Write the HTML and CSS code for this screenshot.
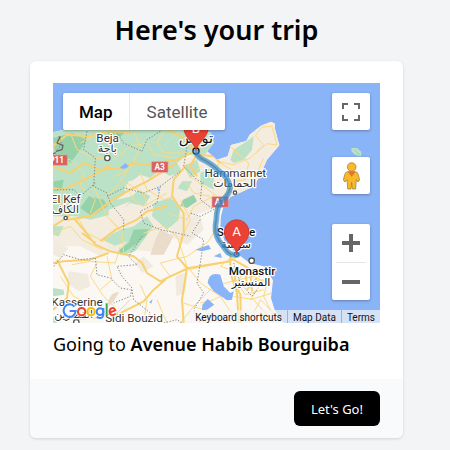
FILE: index.html
```html
<!DOCTYPE html>
<html lang="en">
<head>
<meta charset="utf-8">
<meta name="viewport" content="width=device-width, initial-scale=1">
<title>Here's your trip</title>
<link rel="stylesheet" href="styles.css">
</head>
<body>
<main class="page">
  <h1 class="title">Here's your trip</h1>
  <section class="card">
    <div class="card-body">
      <div class="map">
        <svg class="map-canvas" viewBox="158 250 981 720" preserveAspectRatio="xMidYMid slice" role="img" aria-label="Route from Sousse to Tunis">
          <defs>
            <clipPath id="land">
              <path d="M150 400L200 388L560 380L600 388L632 400L640 430L620 455L650 480L682 470L692 436L738 424L748 405L782 378L812 366L824 372L823 385L837 437L800 480L775 535L760 560L722 578L690 592L669 622L662 650L660 682L672 722L705 758L748 790L790 800L818 842L812 895L822 928L835 950L858 980L150 980Z"/>
            </clipPath>
            <g id="wordmark">
              <path class="blue" d="M222 921A18 19 0 1 0 226 934H208"/>
              <circle class="red" cx="244" cy="936" r="11"/>
              <circle class="yellow" cx="272" cy="936" r="11"/>
              <circle class="blue" cx="299" cy="936" r="10"/>
              <path class="blue" d="M309 925V946Q306 960 289 952"/>
              <path class="green-line" d="M319 911V949"/>
              <path class="red" d="M328 939L345 932Q340 922 333 926Q325 932 329 942Q337 951 346 942"/>
            </g>
          </defs>
          <g clip-path="url(#land)">
            <path fill="#fbf8f3" d="M150 360H860V980H150Z"/>
            <path class="sand" d="M150 640L260 640L330 590L400 530L480 500L600 460L640 350L850 350L850 560L700 590L650 625L600 640L560 650L510 665L500 720L450 755L390 750L360 740L300 770L240 740L150 740Z"/>
            <path class="soft" d="M335 700L385 720L370 765L320 745ZM205 815L262 822L270 860L235 875L200 850ZM525 830L560 818L555 880L528 890ZM160 730L205 745L180 775L158 765ZM510 640L600 650L610 690L560 735L510 710ZM430 770L460 800L425 820L405 790Z"/>
            <path class="dune" d="M480 690L520 710L490 765L450 765L465 720ZM325 900Q335 875 356 878L340 905L320 925Z"/>
            <path class="green" d="M150 380H640L645 425L610 470L560 465L530 490L545 515L510 530L480 512L450 535L420 525L400 540L380 575L350 600L395 590L415 570L450 590L430 620L390 610L350 640L310 650L270 660L230 650L150 650Z"/>
            <path class="green" d="M460 610L510 595L540 620L535 660L500 690L455 650ZM550 500L590 480L600 515L570 535ZM600 520L640 500L640 570L600 550ZM690 480L700 450L740 425L760 410L755 450L730 480L700 490ZM545 545L575 545L560 575L530 565ZM158 865L190 870L192 885L158 890ZM158 950L170 970H158ZM158 680L190 680L175 710L158 705ZM305 720L360 690L400 680L440 650L460 680L405 755L370 765L355 755L380 725L345 738Z"/>
            <path class="forest" d="M158 415L215 400L260 420L240 450L210 490L190 470L165 465ZM265 590L310 600L322 620L275 650L240 625ZM548 600L580 585L590 605L560 625L540 618ZM400 690L445 688L435 710L405 735L360 765L355 752L385 730ZM320 390L370 400L350 425L325 412ZM160 545L190 540L185 570L160 575Z"/>
            <path class="sand" d="M385 545L430 535L425 560L395 580L370 570ZM325 630L390 605L355 642L325 648ZM470 540L520 525L545 545L520 585L480 585Z"/>
            <g class="minor">
              <path d="M158 470L210 480L250 520L240 560L285 600L270 640M210 400L230 450L280 475L340 480L390 440L440 430L460 465L530 475M240 430L300 400L350 430L345 400M400 395L420 440L400 490L370 520L340 530M490 395L470 430L490 460L580 460M490 440L540 390M420 520L440 570L490 600L520 590M395 490L350 560L320 590M370 545L400 600L430 620L500 580M440 620L430 580L380 550M280 560L320 650L360 690M230 650L260 700L310 725L350 690M158 700L210 680L245 720L305 750M370 760L365 700L330 660M430 700L490 680L530 710L560 800M500 640L560 660L580 620L640 590M560 550L580 580L630 590M540 600L570 660L540 720M600 500L570 530L610 560L650 590"/>
              <path d="M290 790L270 830L310 890L350 930L350 970M320 770L335 840L300 870M360 740L345 790L270 785L215 795M180 830L220 890L280 920M420 855L440 900L430 970M510 830L480 790L560 770L620 730L640 700M565 805L600 850L660 890L700 950M600 910L640 900L680 880M550 910L610 930L660 970M540 970L580 920L640 860L695 845L760 830L800 850L790 890L820 950M565 810L690 785L720 765M740 800L710 850L735 885L790 870M720 850L790 840L750 900L815 880M700 890L760 900L820 970M470 900L500 970M690 775L660 800L720 820M760 940L780 900L850 970M230 960L340 950L390 900"/>
              <path d="M650 485L700 495L750 475L800 432L830 436L815 380L785 382L765 408L790 435L770 455M690 440L710 460L745 490L735 540L680 550M620 520L660 490L710 520L690 580M700 520L770 520L790 475"/>
            </g>
            <g class="major">
              <path d="M158 440L200 405L270 410L320 395L395 398M158 500L210 520L250 490L300 510L370 505L400 490L440 495L530 480L585 455M158 565L190 570L240 545L300 515L330 495M200 660L270 650L330 605L390 570L440 545L530 490M158 595L190 620L205 650L158 680M220 655L250 690L285 735L330 755L400 770L425 790L440 820L480 845L510 830L565 805L690 785M325 760L270 780L190 785L158 790M170 780L205 850L200 895L158 930M300 725L345 690L410 660L440 635L500 620M285 730L245 700M340 950L430 905L460 870L495 840M560 495L520 540L515 590L550 640L550 700L530 770L560 805L545 900L550 970"/>
              <path d="M587 462L640 500L675 535L688 570L650 620L642 700L690 765L690 820L710 880L715 970M702 800L705 855L720 885L722 970M590 462L570 500L590 530M590 465L640 470L660 490M690 775L735 800L780 830M587 460L560 420L500 390M588 460L600 425M735 810L740 860M750 820L755 875M770 835L740 870M745 850L790 860"/>
            </g>
            <g class="border">
              <path d="M260 395L250 450L285 475L280 560L320 580L330 610L370 660L370 690M600 395L560 440L550 500L590 540L610 550M480 395L440 420L425 455L370 430L350 400M285 550L240 590L220 570L170 570M540 515L480 560L430 580L370 565L320 590M480 560L470 610L420 635L430 670L480 690L530 700L570 710M605 550L600 600L640 630L600 650L570 640M600 660L575 700L610 720L600 790L590 850L610 880L580 930L600 970"/>
              <path d="M425 710L385 770L410 795L350 800L365 830L395 865L390 890L340 910M395 870L400 900L450 940L440 970M160 800L190 765L240 780L285 775L290 825L330 835L360 865L390 870M490 970L530 960L545 970M700 790L720 850L755 890L770 870M175 410L185 435L170 450"/>
            </g>
            <path class="country" d="M180 410L170 430L188 437L185 450L167 455M158 463L166 459"/>
            <path class="water" d="M358 505L375 490L386 500L372 508ZM470 567L477 565L475 576ZM447 908L457 898L453 912ZM585 750L625 736L632 748L605 755ZM622 850Q625 815 660 825L670 860L690 880L700 875L695 900L680 902L640 875ZM606 915L622 898L642 915L620 930L605 932ZM640 770L660 760L665 775Z"/>
          </g>
          <path class="green" d="M1053 445L1070 445L1083 456L1082 470L1066 466L1054 456Z"/>
          <path fill="none" stroke="#8fcda4" stroke-width="3" d="M1062 450L1078 466"/>
          <g class="shield">
            <rect x="130" y="466" width="71" height="31" rx="2"/>
            <rect x="454" y="486" width="49" height="32" rx="2"/>
            <rect x="635" y="591" width="49" height="32" rx="2"/>
          </g>
          <g class="shield-text">
            <text x="169" y="491">P11</text><text x="478" y="511">A3</text><text x="659" y="616">A1</text>
          </g>
          <g class="town">
            <circle cx="321" cy="475" r="8"/><circle cx="196" cy="655" r="5"/><circle cx="704" cy="579" r="5"/><circle cx="754" cy="783" r="8"/><circle cx="228" cy="968" r="8"/>
          </g>
          <g class="label">
            <text class="arabic" x="321" y="457">باجة</text><text x="322" y="426">Beja</text>
            <text class="arabic" x="703" y="563">الحمامات</text><text x="705" y="532">Hammamet</text>
            <text class="arabic" x="195" y="639">الكاف</text><text x="196" y="609">El Kef</text>
            <text class="arabic" x="220" y="954">القصرين</text><text x="230" y="919">Kasserine</text>
            <text x="401" y="966">Sidi Bouzid</text>
          </g>
          <g class="label city">
            <text class="arabic large" x="587" y="430">تونس</text>
            <text class="arabic" x="707" y="745">سوسة</text><text x="707" y="710">Sousse</text>
            <text class="arabic" x="752" y="859">المنستير</text><text x="755" y="825">Monastir</text>
          </g>
          <circle cx="587" cy="454" r="9" fill="#fff" stroke="#111" stroke-width="4"/>
          <path class="route" d="M587 457Q592 474 612 482Q640 497 656 515Q684 530 689 565Q687 585 664 604Q649 620 648 660Q640 695 655 722L682 758Q695 768 711 765"/>
          <path class="route-line" d="M587 457Q592 474 612 482Q640 497 656 515Q684 530 689 565Q687 585 664 604Q649 620 648 660Q640 695 655 722L682 758Q695 768 711 765"/>
          <circle cx="708" cy="764" r="7" fill="none" stroke="#2d72ad" stroke-width="3"/>
          <g class="pin">
            <path d="M587 453C584 429 550 416 550 382A37 37 0 0 1 624 382C624 416 590 429 587 453Z"/>
            <path d="M709 764C706 736 672 730 672 697A37 37 0 0 1 746 697C746 730 712 736 709 764Z"/>
            <text x="587" y="401">B</text><text x="709" y="710">A</text>
          </g>
          <use class="wordmark-halo" href="#wordmark"/>
          <use class="wordmark" href="#wordmark"/>
        </svg>

        <div class="map-types">
          <button class="type active" type="button">Map</button>
          <button class="type" type="button">Satellite</button>
        </div>
        <div class="map-tools">
          <button class="tool" type="button" aria-label="Toggle fullscreen view">
            <svg width="18" height="18" viewBox="0 0 18 18"><path fill="none" stroke="#666" stroke-width="2" d="M1 6V1H6M12 1H17V6M17 12V17H12M6 17H1V12"/></svg>
          </button>
          <button class="tool pegman" type="button" aria-label="Street View">
            <svg width="17" height="28" viewBox="0 0 51 84"><g fill="#fbb829" stroke="#8d7440" stroke-width="2"><path d="M13 29Q7 30 5 38L1 54L6 60L12 53L14 81H24L26 61L28 81H38L40 53L45 60L50 54L46 38Q44 30 38 29Z"/><circle cx="26" cy="15" r="13"/></g><path fill="#e2762b" d="M14 29H38L26 44Z"/></svg>
          </button>
          <div class="zoom">
            <button type="button" aria-label="Zoom in"><svg width="18" height="18" viewBox="0 0 18 18"><path stroke="#666" stroke-width="4" d="M0 9H18M9 0V18"/></svg></button>
            <button type="button" aria-label="Zoom out"><svg width="18" height="18" viewBox="0 0 18 18"><path stroke="#666" stroke-width="4" d="M0 9H18"/></svg></button>
          </div>
        </div>
        <div class="credits">
          <button type="button">Keyboard shortcuts</button>
          <button type="button">Map Data</button>
          <a href="#terms">Terms</a>
        </div>
      </div>
      <p class="destination">Going to <strong>Avenue Habib Bourguiba</strong></p>
    </div>
    <footer class="card-footer">
      <button class="go" type="button">Let's Go!</button>
    </footer>
  </section>
</main>
</body>
</html>
```
FILE: styles.css
```css
* { box-sizing: border-box; }
body {
  margin: 0;
  background: #f3f4f6;
  color: #000;
  font-family: "Noto Sans", sans-serif;
}
button { border: 0; padding: 0; font: inherit; cursor: pointer; }
.page { padding: 12px 47px 12px 30px; }
.title {
  margin: 0 0 13px;
  font-size: 27px;
  line-height: 36px;
  font-weight: 600;
  text-align: center;
}
.card {
  overflow: hidden;
  border-radius: 6px;
  background: #fff;
  box-shadow: 0 1px 3px rgba(0, 0, 0, .14);
}
.card-body { padding: 22px 23px 21px; }
.map { position: relative; height: 240px; overflow: hidden; background: #8ab4f8; }
.map-canvas { display: block; width: 100%; height: 100%; }

.sand { fill: #f3ecdf; }
.soft { fill: #f1ebdf; }
.dune { fill: #e9dcca; }
.green { fill: #bbe2c6; }
.forest { fill: #95d2aa; }
.water { fill: #8ab4f8; }
.minor, .major, .border, .country { fill: none; stroke-linejoin: round; }
.minor { stroke: #fad985; stroke-width: 3; }
.major { stroke: #f9d070; stroke-width: 6; }
.border { stroke: #83878b; stroke-width: 3; stroke-dasharray: 4 5; }
.country { stroke: #666; stroke-width: 4; }
.shield { fill: #d9605e; stroke: #eda09d; stroke-width: 2; }
.shield-text { fill: #fff; font: 700 25px Roboto, sans-serif; text-anchor: middle; }
.town { fill: #fff; stroke: #555; stroke-width: 4; }
.label {
  fill: #333;
  stroke: #fff;
  stroke-width: 7px;
  stroke-linejoin: round;
  paint-order: stroke;
  font: 400 35px Roboto, sans-serif;
  text-anchor: middle;
}
.city { fill: #111; font-weight: 500; }
.arabic { font: 400 33px "DejaVu Sans", sans-serif; }
.large { font-size: 44px; }
.route, .route-line { fill: none; stroke-linecap: round; stroke-linejoin: round; }
.route { stroke: #2e8ad2; stroke-width: 17; opacity: .65; }
.route-line { stroke: #3f80b8; stroke-width: 5; opacity: .6; }
.pin path { fill: #ea4335; stroke: #b93228; stroke-width: 2; }
.pin text { fill: #fff; font: 400 40px Roboto, sans-serif; text-anchor: middle; }
.wordmark, .wordmark-halo { fill: none; }
.wordmark { stroke-width: 6; --blue: #4285f4; --red: #ea4335; --yellow: #fbbc04; --green: #34a853; }
.wordmark-halo { stroke-width: 11; opacity: .8; --blue: #fff; --red: #fff; --yellow: #fff; --green: #fff; }
.blue { stroke: var(--blue); }
.red { stroke: var(--red); }
.yellow { stroke: var(--yellow); }
.green-line { stroke: var(--green); }

.map-types {
  position: absolute;
  top: 10px;
  left: 10px;
  display: flex;
  height: 37px;
  border-radius: 2px;
  background: #fff;
  box-shadow: 0 1px 3px rgba(0, 0, 0, .3);
}
.type {
  padding: 0 17px;
  background: none;
  color: #565656;
  font: 400 17px Roboto, sans-serif;
}
.type.active {
  padding: 0 16px;
  border-right: 1px solid #e8e8e8;
  color: #000;
  font-weight: 500;
}
.map-tools {
  position: absolute;
  top: 10px;
  right: 10px;
  display: flex;
  flex-direction: column;
  width: 38px;
}
.tool, .zoom {
  border-radius: 2px;
  background: #fff;
  box-shadow: 0 1px 3px rgba(0, 0, 0, .3);
}
.tool, .zoom button { display: grid; place-items: center; width: 100%; height: 37px; }
.pegman { margin: 27px 0 30px; }
.zoom button { height: 38px; background: none; }
.zoom button + button::before {
  content: "";
  width: 30px;
  height: 1px;
  background: #e6e6e6;
}
.zoom button + button { grid-template-rows: 1px 1fr; }
.credits {
  position: absolute;
  right: 0;
  bottom: 0;
  display: flex;
  height: 13px;
  gap: 1px;
}
.credits > * {
  padding: 0 5px;
  background: rgba(245, 245, 245, .7);
  color: #111;
  font: 400 10px/16px Roboto, sans-serif;
  text-decoration: none;
}
.destination { margin: 7px 0 0; font-size: 18px; line-height: 28px; }
.destination strong { font-weight: 600; }
.card-footer {
  display: flex;
  justify-content: flex-end;
  padding: 12px 23px;
  background: #f9fafb;
}
.go {
  height: 35px;
  padding: 0 17px;
  border-radius: 6px;
  background: #000;
  color: #fff;
  font-size: 13px;
}
```
